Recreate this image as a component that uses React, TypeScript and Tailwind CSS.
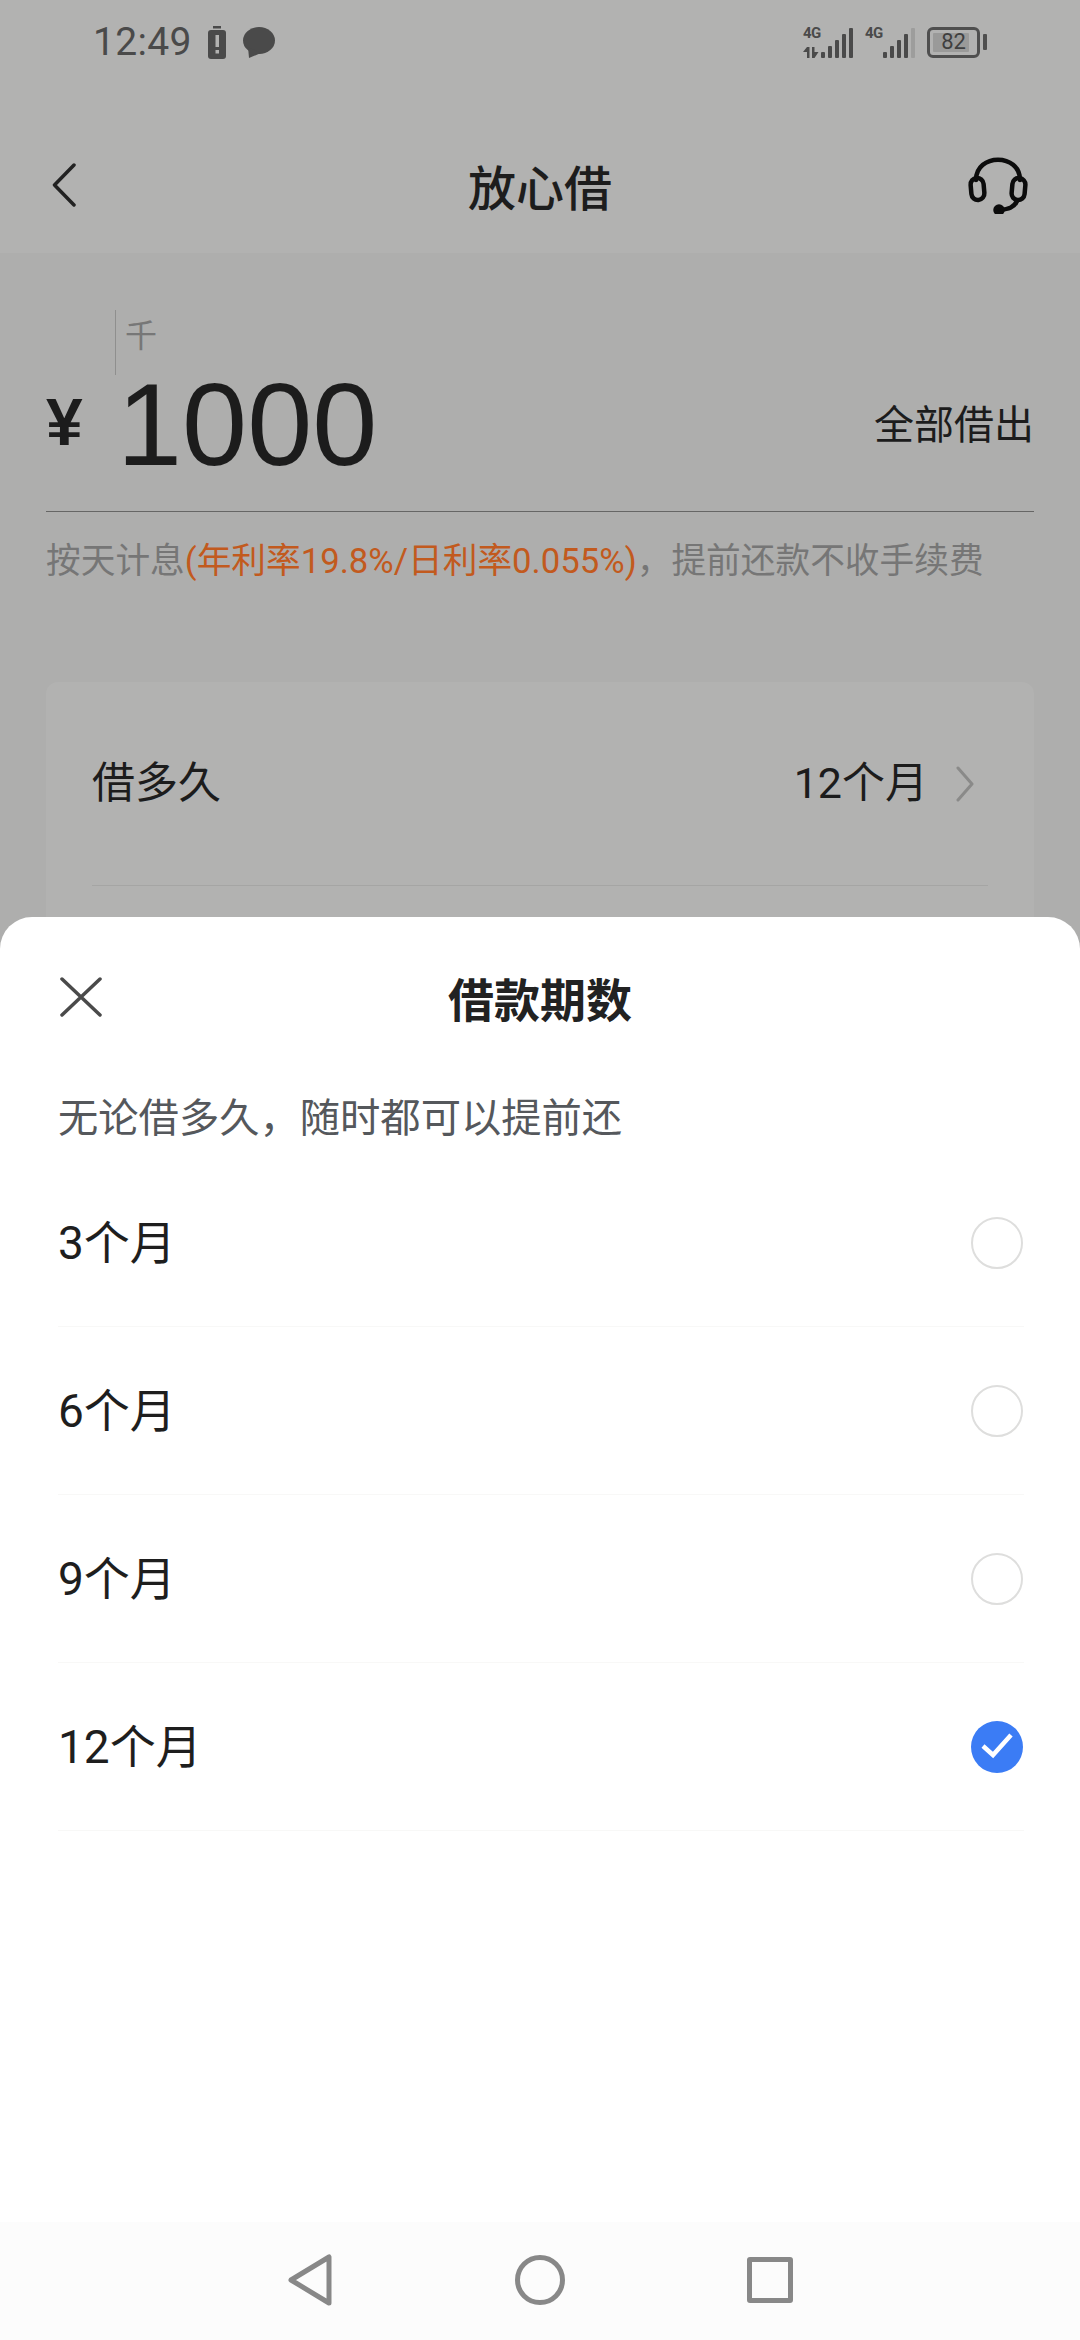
import React from "react";

const latin = "font-['Roboto','Noto_Sans_CJK_SC',sans-serif]";

function Signal({ levels, arrows }: { levels: number; arrows?: boolean }) {
  const heights = [6, 12, 18, 24, 30];
  return (
    <div className="relative w-[50px] h-[32px]">
      <span className="absolute left-0 top-[-1px] text-[15px] leading-[17px] font-bold text-[#4a4a4a] tracking-[-0.5px] font-['Roboto',sans-serif]">4G</span>
      {arrows && (
        <svg className="absolute left-0 bottom-0" width="16" height="11" viewBox="0 0 16 11" fill="#4a4a4a">
          <path d="M4 0 L4 11 L6.5 11 L6.5 0 Z M4 0 L0 5 L4 5 Z" />
          <path d="M9 0 L11.5 0 L11.5 5 L15.5 5 L11.5 11 L9 11 Z" />
        </svg>
      )}
      <div className="absolute right-0 bottom-0 flex items-end gap-[3px]">
        {heights.map((h, i) => (
          <div
            key={i}
            className={i < levels ? "w-[4px] bg-[#4a4a4a] rounded-[1px]" : "w-[4px] bg-[#9d9d9c] rounded-[1px]"}
            style={{ height: h }}
          />
        ))}
      </div>
    </div>
  );
}

function StatusBar() {
  return (
    <div className="h-[84px] pl-[93px] pr-[93px] flex items-center justify-between">
      <div className="flex items-center">
        <span className="text-[39px] leading-none text-[#4a4a4a] font-['Roboto',sans-serif] tracking-[0.3px]">12:49</span>
        <svg className="ml-[16px]" width="18" height="33" viewBox="0 0 18 33">
          <rect x="5" y="0" width="8" height="2.5" fill="#4a4a4a" />
          <rect x="0" y="4" width="18" height="29" rx="3" fill="#4a4a4a" />
          <rect x="7.5" y="9" width="3.5" height="12" fill="#b2b2b1" />
          <rect x="7.5" y="24" width="3.5" height="3.5" fill="#b2b2b1" />
        </svg>
        <svg className="ml-[17px]" width="32" height="31" viewBox="0 0 32 31" fill="#4a4a4a">
          <ellipse cx="16" cy="13.5" rx="16" ry="13.5" />
          <path d="M5 20 L6 31 L18 26 Z" />
        </svg>
      </div>
      <div className="flex items-center">
        <Signal levels={5} arrows />
        <div className="ml-[12px]">
          <Signal levels={4} />
        </div>
        <div className="ml-[12px] relative w-[53px] h-[31px] border-[3px] border-[#4f4f4f] rounded-[6px] flex items-center justify-center">
          <div className="absolute left-[3px] top-[3px] bottom-[3px] w-[36px] bg-[#9a9a99] rounded-[1px]" />
          <span className="relative text-[22px] leading-none text-[#3f3f3f] font-['Roboto',sans-serif]">82</span>
        </div>
        <div className="ml-[3px] w-[4px] h-[16px] bg-[#4f4f4f] rounded-[1px]" />
      </div>
    </div>
  );
}

function AppHeader() {
  return (
    <div className="h-[169px] pt-[32px] grid grid-cols-[1fr_auto_1fr] items-center px-[52px] bg-[#b2b2b1]">
      <svg width="24" height="44" viewBox="0 0 24 44" fill="none" stroke="#222222" strokeWidth="3.5" strokeLinecap="round" strokeLinejoin="round">
        <path d="M22 2 L2.5 22 L22 42" />
      </svg>
      <span className="text-[48px] leading-none font-medium text-[#1d1d1d] font-['Noto_Sans_CJK_SC',sans-serif]">放心借</span>
      <div className="flex justify-end">
        <svg width="60" height="58" viewBox="0 0 60 58" fill="none" stroke="#0c0c0c" strokeWidth="4.5" strokeLinecap="round">
          <path d="M8 24 C8 -3 52 -3 52 24" />
          <rect x="3" y="22" width="13" height="22" rx="6.5" transform="rotate(-5 9 33)" />
          <rect x="44" y="22" width="13" height="22" rx="6.5" transform="rotate(5 50 33)" />
          <path d="M49 45 C46 52 40 53 32 54" />
          <circle cx="31" cy="54" r="3.5" fill="#0c0c0c" />
        </svg>
      </div>
    </div>
  );
}

function AmountSection() {
  return (
    <div className="px-[46px] pt-[57px]">
      <div className="h-[65px] pl-[69px] flex">
        <div className="w-px h-full bg-[#8f8f8e]" />
        <span className="ml-[9px] text-[32px] leading-[46px] text-[#777777] font-['Noto_Sans_CJK_SC',sans-serif]">千</span>
      </div>
      <div className="h-[137px] pb-[38px] flex items-center border-b border-[#666665]">
        <span className="w-[71px] mt-[-4px] text-[66px] leading-none font-bold text-[#1c1c1c] font-['Liberation_Sans',sans-serif]">¥</span>
        <span className="text-[117px] leading-none text-[#1c1c1c] font-['Liberation_Sans',sans-serif]">1000</span>
        <span className="ml-auto mt-[-4px] text-[40px] leading-none text-[#1c1c1c] font-['Noto_Sans_CJK_SC',sans-serif]">全部借出</span>
      </div>
      <p className={`h-[96px] pt-[3px] flex items-center text-[34.7px] whitespace-pre text-[#767676] ${latin}`}>
        按天计息<span className="text-[#c25a1e]">(年利率19.8%/日利率0.055%)</span>，提前还款不收手续费
      </p>
    </div>
  );
}

function LoanCard() {
  return (
    <div className="mx-[46px] mt-[74px] h-[400px] rounded-[12px] bg-[#b2b2b1] px-[46px]">
      <div className={`h-[204px] flex items-center border-b border-[#a5a5a4] ${latin}`}>
        <span className="text-[43px] leading-none text-[#1c1c1c]">借多久</span>
        <span className="ml-auto text-[43px] leading-none text-[#1c1c1c]">12个月</span>
        <svg className="ml-[28px] mr-[14px]" width="18" height="36" viewBox="0 0 18 36" fill="none" stroke="#8a8a89" strokeWidth="3" strokeLinecap="round" strokeLinejoin="round">
          <path d="M2 2 L16 18 L2 34" />
        </svg>
      </div>
    </div>
  );
}

function Option({ label, selected }: { label: string; selected?: boolean }) {
  return (
    <div className="h-[168px] flex items-center justify-between border-b border-[#f8f8f7]">
      <span className="text-[46px] leading-none text-[#1e1e1e]">{label}</span>
      <div className="mr-[1px]">
        {selected ? (
          <svg width="52" height="52" viewBox="0 0 52 52">
            <circle cx="26" cy="26" r="26" fill="#3b7cf5" />
            <path d="M12 25 L22 34 L40 14" fill="none" stroke="#ffffff" strokeWidth="4.5" />
          </svg>
        ) : (
          <div className="w-[52px] h-[52px] rounded-full border-2 border-[#dededd]" />
        )}
      </div>
    </div>
  );
}

function NavBar() {
  return (
    <div className="h-[118px] bg-[#fcfcfc] relative flex items-center justify-center gap-[182px] pb-[2px]">
      <svg width="46" height="52" viewBox="0 0 46 52" fill="none" stroke="#888888" strokeWidth="5" strokeLinejoin="round">
        <path d="M42 3 L42 49 L4 26 Z" />
      </svg>
      <svg width="50" height="50" viewBox="0 0 50 50" fill="none" stroke="#888888" strokeWidth="5">
        <circle cx="25" cy="25" r="22.5" />
      </svg>
      <div className="w-[46px] h-[46px] border-[5px] border-[#888888] rounded-[3px]" />
    </div>
  );
}

function Sheet() {
  return (
    <div className="absolute left-0 right-0 bottom-0 h-[1423px] bg-white rounded-t-[32px] flex flex-col">
      <div className="h-[160px] relative flex items-center justify-center">
        <svg className="absolute left-[60px] top-[60px]" width="42" height="40" viewBox="0 0 42 40" fill="none" stroke="#4a4a4a" strokeWidth="3.5" strokeLinecap="round">
          <path d="M2 2 L40 38 M40 2 L2 38" />
        </svg>
        <span className="text-[46px] leading-none font-bold text-[#222222] font-['Noto_Sans_CJK_SC',sans-serif]">借款期数</span>
      </div>
      <div className={`flex-1 pl-[58px] pr-[56px] ${latin}`}>
        <p className="h-[82px] pt-[2px] flex items-center text-[40.3px] text-[#55585c]">无论借多久，随时都可以提前还</p>
        <Option label="3个月" />
        <Option label="6个月" />
        <Option label="9个月" />
        <Option label="12个月" selected />
      </div>
      <NavBar />
    </div>
  );
}

export default function App() {
  return (
    <div className="relative w-[1080px] h-[2340px] overflow-hidden bg-[#aeaead]">
      <div className="bg-[#b2b2b1]">
        <StatusBar />
        <AppHeader />
      </div>
      <AmountSection />
      <LoanCard />
      <Sheet />
    </div>
  );
}
